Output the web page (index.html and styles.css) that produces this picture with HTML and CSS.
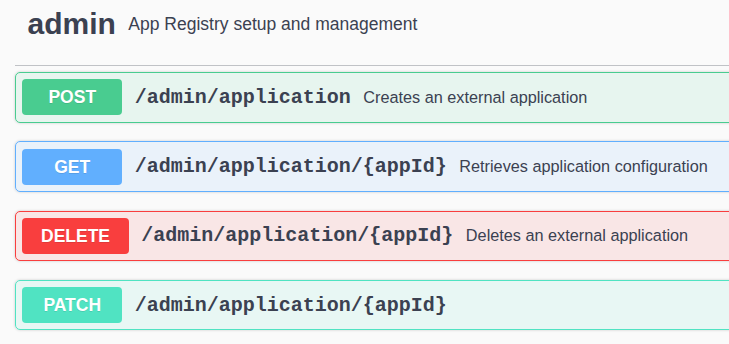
FILE: index.html
```html
<!DOCTYPE html>
<html lang="en">
<head>
    <meta charset="UTF-8">
    <meta name="viewport" content="width=device-width, initial-scale=1.0">
    <title>admin - App Registry</title>
    <link rel="stylesheet" href="styles.css">
</head>
<body>
    <div class="wrapper">
        <h4 class="tag">
            <span class="tag-name">admin</span>
            <small class="tag-desc">App Registry setup and management</small>
        </h4>

        <div class="operations">
            <div class="opblock opblock-post">
                <span class="method">POST</span>
                <span class="path">/admin/application</span>
                <span class="summary">Creates an external application</span>
            </div>
            <div class="opblock opblock-get">
                <span class="method">GET</span>
                <span class="path">/admin/application/{appId}</span>
                <span class="summary">Retrieves application configuration</span>
            </div>
            <div class="opblock opblock-delete">
                <span class="method">DELETE</span>
                <span class="path">/admin/application/{appId}</span>
                <span class="summary">Deletes an external application</span>
            </div>
            <div class="opblock opblock-patch">
                <span class="method">PATCH</span>
                <span class="path">/admin/application/{appId}</span>
            </div>
        </div>
    </div>
</body>
</html>
```

FILE: styles.css
```css
body {
    margin: 0;
    padding: 0;
    background-color: #fafafa;
    color: #3b4151;
    font-family: "Liberation Sans", Arial, sans-serif;
    overflow: hidden;
}
.wrapper {
    width: 1000px;
    margin-left: 15px;
}
.tag {
    display: flex;
    align-items: center;
    margin: 0 0 6px;
    padding: 7px 12px 24px 12.5px;
    border-bottom: 1px solid rgba(59, 65, 81, 0.3);
    font-weight: normal;
}
.tag-name {
    font-size: 30px;
    font-weight: bold;
}
.tag-desc {
    font-size: 17.5px;
    padding: 0 12.5px;
}
.opblock {
    display: flex;
    align-items: center;
    padding: 6.25px;
    margin-bottom: 18.75px;
    border: 1px solid;
    border-radius: 5px;
    box-shadow: 0 0 3px rgba(0, 0, 0, 0.19);
}
.method {
    min-width: 100px;
    box-sizing: border-box;
    height: 36px;
    line-height: 36px;
    padding: 0 18.75px;
    border-radius: 4px;
    color: #fff;
    font-size: 17.5px;
    font-weight: bold;
    text-align: center;
    text-shadow: 0 1px 0 rgba(0, 0, 0, 0.1);
}
.path {
    padding: 0 12.5px;
    font-family: "Liberation Mono", "Courier New", monospace;
    font-size: 20px;
    font-weight: bold;
}
.summary {
    font-size: 16.25px;
}
.opblock-post {
    border-color: #49cc90;
    background-color: rgba(73, 204, 144, 0.1);
}
.opblock-post .method {
    background-color: #49cc90;
}
.opblock-get {
    border-color: #61affe;
    background-color: rgba(97, 175, 254, 0.1);
}
.opblock-get .method {
    background-color: #61affe;
}
.opblock-delete {
    border-color: #f93e3e;
    background-color: rgba(249, 62, 62, 0.1);
}
.opblock-delete .method {
    background-color: #f93e3e;
}
.opblock-patch {
    border-color: #50e3c2;
    background-color: rgba(80, 227, 194, 0.1);
}
.opblock-patch .method {
    background-color: #50e3c2;
}
```
